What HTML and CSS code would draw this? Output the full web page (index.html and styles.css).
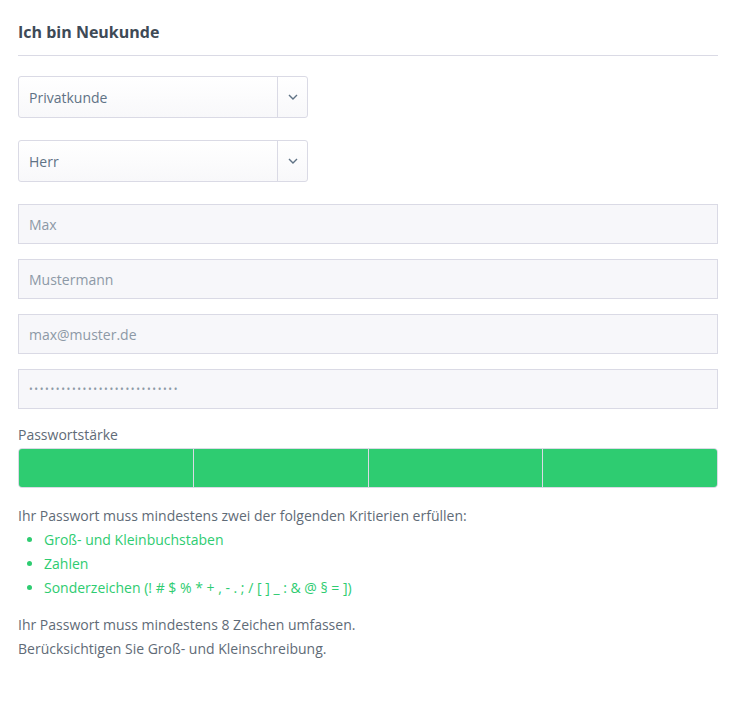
FILE: index.html
```html
<!DOCTYPE html>
<html lang="de">
<head>
  <meta charset="UTF-8" />
  <title>Ich bin Neukunde</title>
  <link rel="stylesheet" href="styles.css">
</head>
<body>
  <div class="register">
    <h2 class="register-title">Ich bin Neukunde</h2>
    <div class="select-field">
      <span class="select-value">Privatkunde</span>
      <span class="select-arrow"><svg width="10" height="6" viewBox="0 0 10 6"><path d="M1 1l4 4 4-4" fill="none" stroke="#5f7285" stroke-width="1.4"/></svg></span>
    </div>
    <div class="select-field">
      <span class="select-value">Herr</span>
      <span class="select-arrow"><svg width="10" height="6" viewBox="0 0 10 6"><path d="M1 1l4 4 4-4" fill="none" stroke="#5f7285" stroke-width="1.4"/></svg></span>
    </div>
    <div class="input-field">Max</div>
    <div class="input-field">Mustermann</div>
    <div class="input-field">max@muster.de</div>
    <div class="input-field password">••••••••••••••••••••••••••••</div>
    <div class="strength-label">Passwortstärke</div>
    <div class="strength-bar">
      <div class="strength-seg"></div>
      <div class="strength-seg"></div>
      <div class="strength-seg"></div>
      <div class="strength-seg"></div>
    </div>
    <p class="hint">Ihr Passwort muss mindestens zwei der folgenden Kritierien erfüllen:</p>
    <ul class="criteria">
      <li>Groß- und Kleinbuchstaben</li>
      <li>Zahlen</li>
      <li>Sonderzeichen (! # $ % * + , - . ; / [ ] _ : &amp; @ § = ])</li>
    </ul>
    <p class="hint rules">Ihr Passwort muss mindestens 8 Zeichen umfassen.<br>Berücksichtigen Sie Groß- und Kleinschreibung.</p>
  </div>
</body>
</html>
```

FILE: styles.css
```css
body {
  margin: 0;
  background: #fff;
  font-family: "Open Sans", Arial, sans-serif;
  color: #5f6b77;
}
.register {
  padding: 18px 17px 18px 18px;
}
.register-title {
  margin: 0;
  padding: 3px 0 12px;
  font-size: 16px;
  line-height: 22px;
  font-weight: 700;
  color: #3e4a56;
  border-bottom: 1px solid #dadae5;
  margin-bottom: 20px;
}
.select-field {
  display: flex;
  width: 288px;
  height: 40px;
  border: 1px solid #dadae5;
  border-radius: 3px;
  background: linear-gradient(#fff, #f8f8fa);
  margin-bottom: 22px;
  font-size: 14px;
  color: #5f7285;
}
.select-value {
  flex: 1;
  display: flex;
  align-items: center;
  padding-left: 10px;
  border-right: 1px solid #dadae5;
}
.select-arrow {
  width: 29px;
  display: flex;
  align-items: center;
  justify-content: center;
}
.input-field {
  height: 38px;
  border: 1px solid #dadae5;
  background: #f7f7fa;
  display: flex;
  align-items: center;
  padding-left: 10px;
  font-size: 14px;
  color: #8d99a6;
  margin-bottom: 15px;
}
.input-field.password {
  font-size: 10px;
  letter-spacing: 1.6px;
  margin-bottom: 16px;
}
.strength-label {
  font-size: 14px;
  line-height: 20px;
  color: #5f6b77;
  margin-bottom: 3px;
}
.strength-bar {
  display: flex;
  height: 38px;
  border: 1px solid #dadae5;
  border-radius: 4px;
  overflow: hidden;
  gap: 1px;
  background: #dadae5;
}
.strength-seg {
  flex: 1;
  background: #2ecc71;
}
.hint {
  margin: 16px 0 0;
  font-size: 14px;
  line-height: 24px;
  color: #5f6b77;
}
.criteria {
  margin: 0;
  padding-left: 26px;
  font-size: 14px;
  line-height: 24px;
  color: #2ecc71;
}
.hint.rules {
  margin-top: 13px;
}
```
